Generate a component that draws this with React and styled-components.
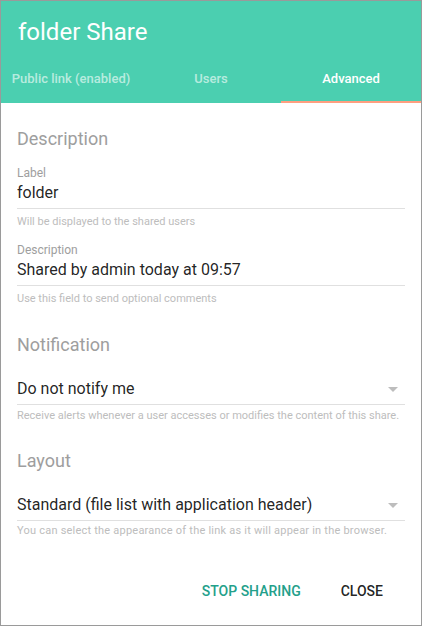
import React from "react";
import styled, { createGlobalStyle } from "styled-components";

const Global = createGlobalStyle`
  html, body { margin: 0; padding: 0; background: #ffffff; }
  body { font-family: Roboto, "Liberation Sans", sans-serif; }
  * { box-sizing: border-box; }
`;

const Dialog = styled.div`
  width: 422px;
  height: 626px;
  border: 1px solid #9a9a9a;
  background: #fff;
  display: flex;
  flex-direction: column;
  overflow: hidden;
`;

const Header = styled.header`
  background: #4bcfb0;
  color: #fff;
`;

const Title = styled.h1`
  margin: 0;
  padding: 15px 17px 7px;
  font-size: 24px;
  font-weight: 400;
  line-height: 32px;
`;

const Tabs = styled.nav`
  display: grid;
  grid-template-columns: repeat(3, 1fr);
  grid-template-rows: 48px;
  height: 48px;
`;

const Tab = styled.div`
  height: 48px;
  display: flex;
  align-items: center;
  justify-content: center;
  padding-top: 1px;
  font-size: 13px;
  font-weight: 500;
  line-height: 16px;
  color: ${(p) => (p.$active ? "#ffffff" : "rgba(255,255,255,0.62)")};
  border-bottom: 2px solid ${(p) => (p.$active ? "#ff9f80" : "transparent")};
`;

const Body = styled.main`
  flex: 1;
  padding: 24px 16px 0 16px;
  display: flex;
  flex-direction: column;
`;

const SectionTitle = styled.h2`
  margin: ${(p) => p.$mt || 0}px 0 0;
  font-size: 18px;
  font-weight: 400;
  line-height: 24px;
  color: #9e9e9e;
`;

const Field = styled.div`
  margin-top: ${(p) => p.$mt || 0}px;
  display: flex;
  flex-direction: column;
`;

const FieldLabel = styled.div`
  font-size: 12px;
  line-height: 16px;
  color: #9e9e9e;
`;

const Value = styled.div`
  display: flex;
  align-items: center;
  justify-content: space-between;
  font-size: 16px;
  line-height: 24px;
  color: rgba(0, 0, 0, 0.87);
  padding-bottom: 3px;
  border-bottom: 1px solid #e0e0e0;
`;

const Helper = styled.div`
  margin-top: ${(p) => p.$mt}px;
  font-size: 11px;
  line-height: 14px;
  letter-spacing: ${(p) => p.$spacing || 0}px;
  color: #bdbdbd;
`;

const Arrow = styled.svg`
  width: 10px;
  height: 5px;
  margin-right: 7px;
  fill: #bdbdbd;
`;

const Footer = styled.footer`
  display: flex;
  justify-content: flex-end;
  gap: 8px;
  padding: 0 22px 16px 8px;
`;

const Button = styled.button`
  border: 0;
  background: transparent;
  height: 36px;
  padding: 0 16px;
  font-family: Roboto, "Liberation Sans", sans-serif;
  font-size: 14px;
  font-weight: 500;
  text-transform: uppercase;
  line-height: 36px;
  color: ${(p) => (p.$primary ? "#23a08a" : "rgba(0,0,0,0.87)")};
`;

const Caret = () => (
  <Arrow viewBox="0 0 10 5">
    <path d="M0 0L10 0L5 5Z" />
  </Arrow>
);

export default function App() {
  return (
    <>
      <Global />
      <Dialog>
        <Header>
          <Title>folder Share</Title>
          <Tabs>
            <Tab>Public link (enabled)</Tab>
            <Tab>Users</Tab>
            <Tab $active>Advanced</Tab>
          </Tabs>
        </Header>
        <Body>
          <SectionTitle>Description</SectionTitle>
          <Field $mt={14}>
            <FieldLabel>Label</FieldLabel>
            <Value>folder</Value>
          </Field>
          <Helper $mt={6}>Will be displayed to the shared users</Helper>
          <Field $mt={13}>
            <FieldLabel>Description</FieldLabel>
            <Value>Shared by admin today at 09:57</Value>
          </Field>
          <Helper $mt={6}>Use this field to send optional comments</Helper>

          <SectionTitle $mt={27}>Notification</SectionTitle>
          <Field $mt={20}>
            <Value>
              Do not notify me
              <Caret />
            </Value>
          </Field>
          <Helper $mt={4}>
            Receive alerts whenever a user accesses or modifies the content of this share.
          </Helper>

          <SectionTitle $mt={26}>Layout</SectionTitle>
          <Field $mt={20}>
            <Value>
              Standard (file list with application header)
              <Caret />
            </Value>
          </Field>
          <Helper $mt={3} $spacing={0.22}>
            You can select the appearance of the link as it will appear in the browser.
          </Helper>
        </Body>
        <Footer>
          <Button $primary>Stop sharing</Button>
          <Button>Close</Button>
        </Footer>
      </Dialog>
    </>
  );
}
